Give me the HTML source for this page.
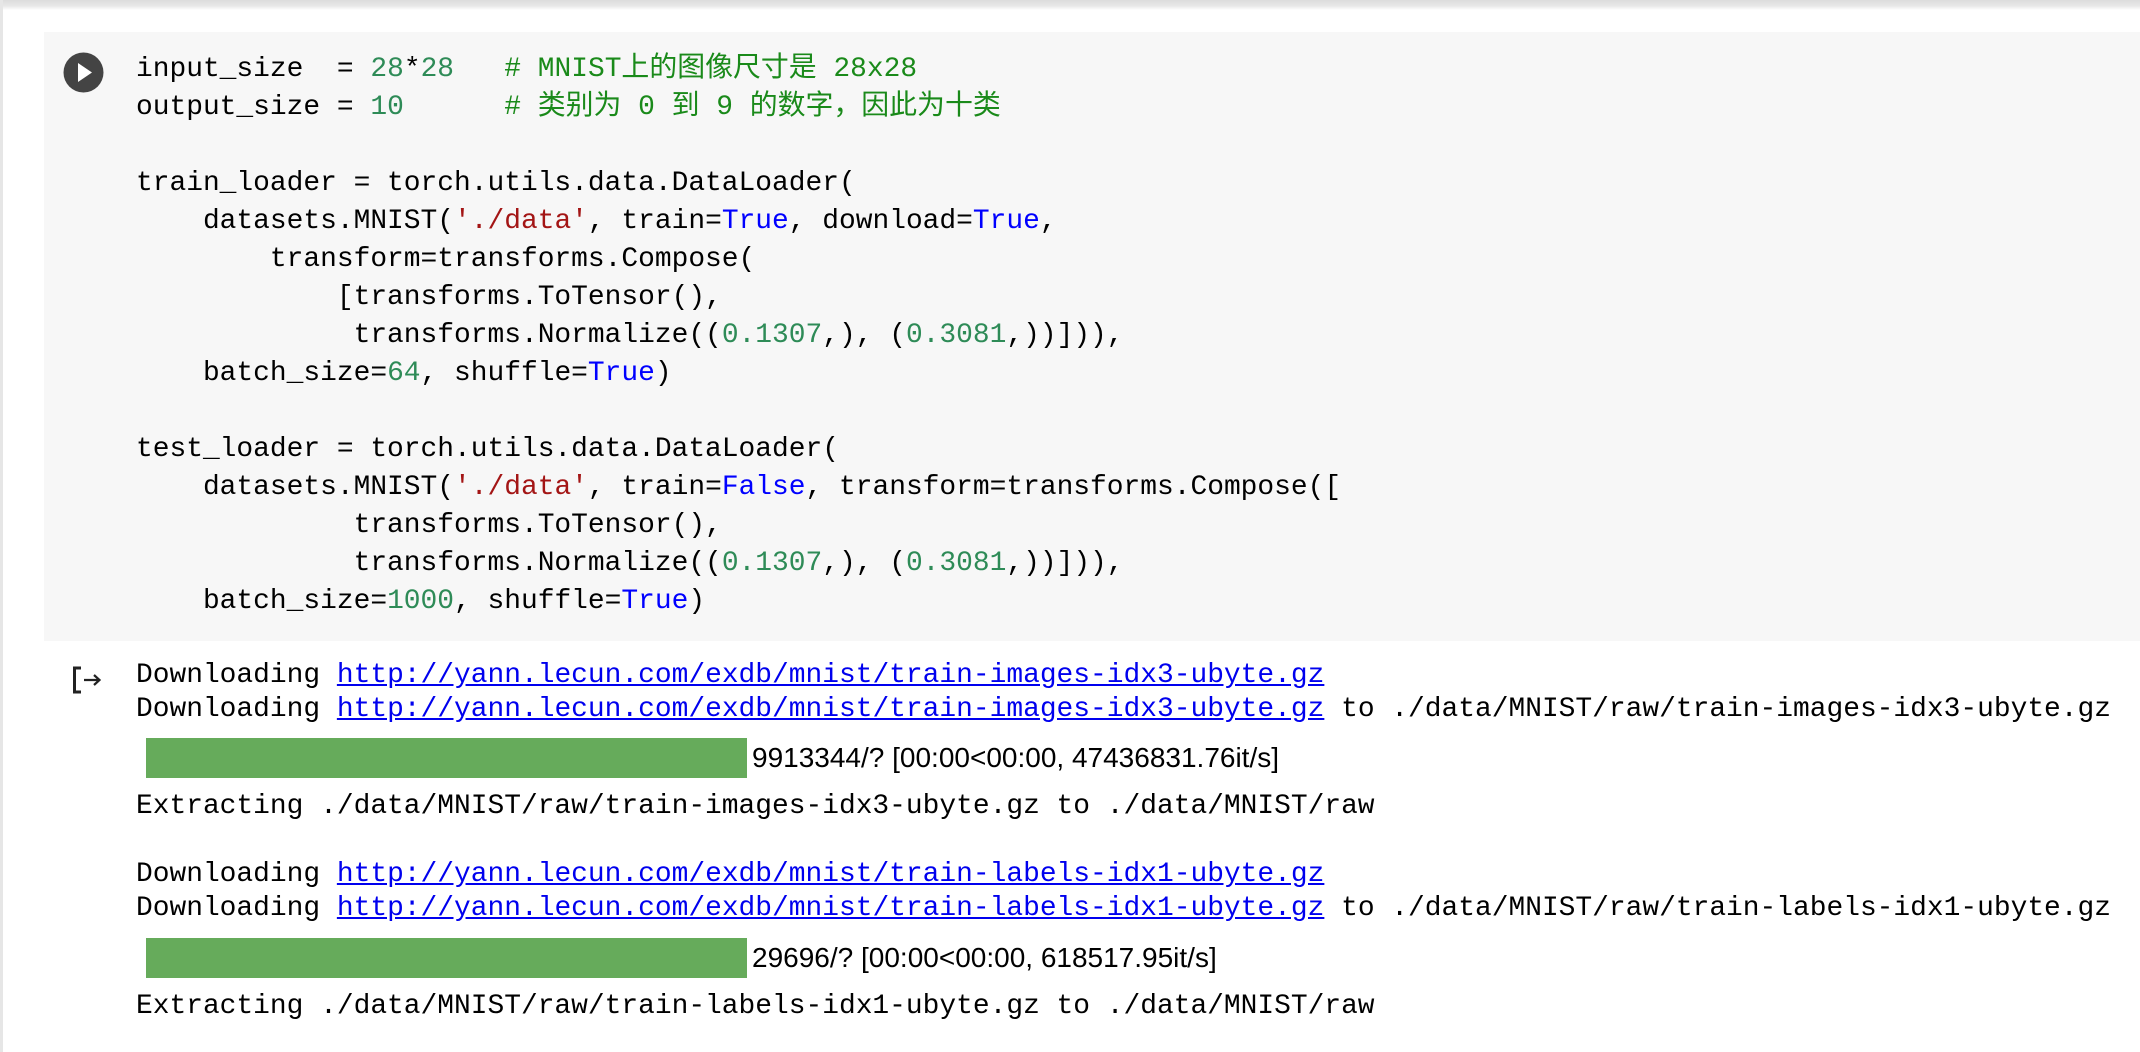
<!DOCTYPE html>
<html><head><meta charset="utf-8"><style>
html,body{margin:0;padding:0;width:2140px;height:1052px;overflow:hidden;background:#fff;position:relative}
.top{position:absolute;left:0;top:0;width:2140px;height:10px;background:linear-gradient(#dcdcdc,#e8e8e8 60%,#fff)}
.lb{position:absolute;left:0;top:0;width:3px;height:1052px;background:#e6e6e6}
.cell{position:absolute;left:44px;top:32px;width:2096px;height:609px;background:#f7f7f7}
.m{font-family:"Liberation Mono","Noto Sans CJK SC",monospace;font-size:27.9px;color:#000;white-space:pre;position:absolute;left:136px}
pre.m{margin:0;top:51px;line-height:38px}
.n{color:#2e8b57}.c{color:#1a8a1a}.s{color:#a31515}.k{color:#0000ff}
.o{line-height:34px}
a{color:#0000ee;text-decoration:underline}
.bar{position:absolute;left:146px;width:601px;height:40px;background:#66ab5b}
.pt{position:absolute;left:752px;font-family:"Liberation Sans",sans-serif;font-size:28px;line-height:40px;color:#000;white-space:pre}
</style></head><body>
<div class="top"></div><div class="lb"></div>
<div class="cell"></div>
<svg style="position:absolute;left:63px;top:52px" width="42" height="42" viewBox="0 0 42 42"><circle cx="20.5" cy="20.5" r="20" fill="#444"/><path d="M15 11 L29 20.5 L15 30 Z" fill="#fff"/></svg>
<pre class="m">input_size  = <span class="n">28</span>*<span class="n">28</span>   <span class="c"># MNIST上的图像尺寸是 28x28</span>
output_size = <span class="n">10</span>      <span class="c"># 类别为 0 到 9 的数字，因此为十类</span>

train_loader = torch.utils.data.DataLoader(
    datasets.MNIST(<span class="s">'./data'</span>, train=<span class="k">True</span>, download=<span class="k">True</span>,
        transform=transforms.Compose(
            [transforms.ToTensor(),
             transforms.Normalize((<span class="n">0.1307</span>,), (<span class="n">0.3081</span>,))])),
    batch_size=<span class="n">64</span>, shuffle=<span class="k">True</span>)

test_loader = torch.utils.data.DataLoader(
    datasets.MNIST(<span class="s">'./data'</span>, train=<span class="k">False</span>, transform=transforms.Compose([
             transforms.ToTensor(),
             transforms.Normalize((<span class="n">0.1307</span>,), (<span class="n">0.3081</span>,))])),
    batch_size=<span class="n">1000</span>, shuffle=<span class="k">True</span>)</pre>
<svg style="position:absolute;left:70px;top:664px" width="34" height="32" viewBox="0 0 34 32"><path d="M11 4 H4.5 V28 H11" fill="none" stroke="#222" stroke-width="3"/><path d="M14 16 H29 M24 11 L29.5 16 L24 21" fill="none" stroke="#222" stroke-width="2.2"/></svg>
<div class="m o" style="top:659px">Downloading <a>http://yann.lecun.com/exdb/mnist/train-images-idx3-ubyte.gz</a></div>
<div class="m o" style="top:693px">Downloading <a>http://yann.lecun.com/exdb/mnist/train-images-idx3-ubyte.gz</a> to ./data/MNIST/raw/train-images-idx3-ubyte.gz</div>
<div class="bar" style="top:738px"></div><div class="pt" style="top:738px">9913344/? [00:00&lt;00:00, 47436831.76it/s]</div>
<div class="m o" style="top:790px">Extracting ./data/MNIST/raw/train-images-idx3-ubyte.gz to ./data/MNIST/raw</div>
<div class="m o" style="top:858px">Downloading <a>http://yann.lecun.com/exdb/mnist/train-labels-idx1-ubyte.gz</a></div>
<div class="m o" style="top:892px">Downloading <a>http://yann.lecun.com/exdb/mnist/train-labels-idx1-ubyte.gz</a> to ./data/MNIST/raw/train-labels-idx1-ubyte.gz</div>
<div class="bar" style="top:938px"></div><div class="pt" style="top:938px">29696/? [00:00&lt;00:00, 618517.95it/s]</div>
<div class="m o" style="top:990px">Extracting ./data/MNIST/raw/train-labels-idx1-ubyte.gz to ./data/MNIST/raw</div>
</body></html>
